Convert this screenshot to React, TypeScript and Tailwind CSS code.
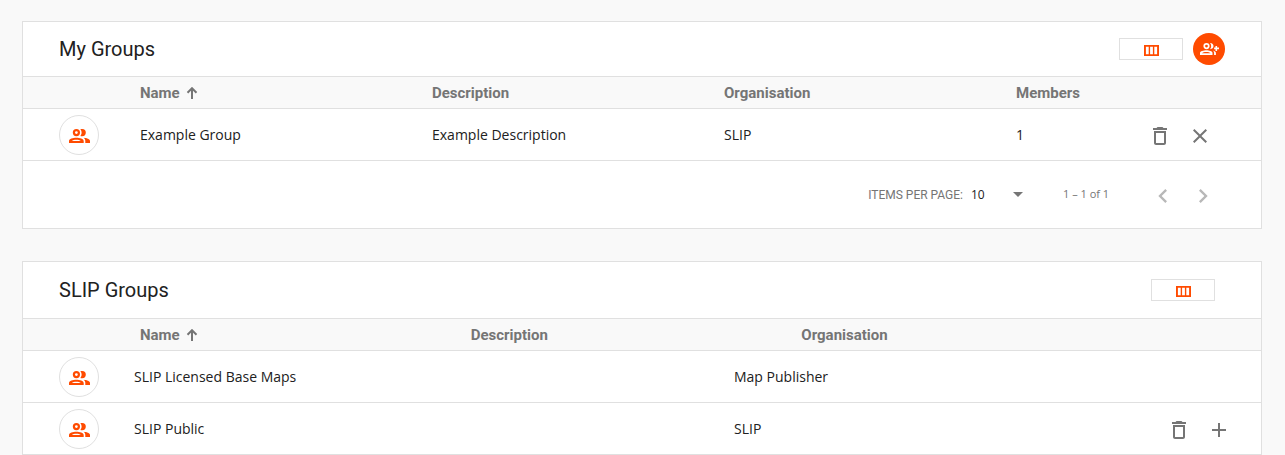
import React from "react";
import { MdAdd, MdChevronLeft, MdChevronRight, MdClose, MdOutlineDelete } from "react-icons/md";

function SortArrow() {
  return (
    <svg width="12" height="12" viewBox="0 0 12 12" fill="none" stroke="#757575" strokeWidth="2" aria-hidden="true">
      <path d="M6 12V1.5M1.5 5.7 6 1.2 10.5 5.7" />
    </svg>
  );
}

function PeopleIcon() {
  return (
    <svg width="21" height="14" viewBox="0 0 21 14" fill="currentColor" aria-hidden="true">
      <path
        fillRule="evenodd"
        d="M7.4 0a3.6 3.6 0 1 1 0 7.2 3.6 3.6 0 0 1 0-7.2zm0 2.2a1.4 1.4 0 1 0 0 2.8 1.4 1.4 0 0 0 0-2.8zM0 14v-2C0 9.8 4 8.7 7.3 8.7s7.4 1.1 7.4 3.3v2zm2.9-2.1h8.900c-.8-.7-2.700-1.100-4.500-1.100s-3.700.4-4.400 1.100z"
      />
      <path d="M11.300.200C12 0 12.600 0 13.200 0a3.600 3.600 0 0 1 0 7.200c-.6 0-1.200 0-1.900-.2.900-1 1.300-2.100 1.300-3.400S12.200 1.200 11.300.200zM14.700 8.800c3.200.3 6.300 1.300 6.300 3.200v2h-4.700v-2c0-1.400-.5-2.400-1.600-3.200z" />
    </svg>
  );
}

function GroupAddIcon() {
  return (
    <svg width="19" height="12" viewBox="0 0 19 12" fill="currentColor" aria-hidden="true">
      <path
        fillRule="evenodd"
        d="M6.500 0a3.100 3.100 0 1 1 0 6.200 3.100 3.100 0 0 1 0-6.200zm0 1.700a1.400 1.400 0 1 0 0 2.800 1.400 1.400 0 0 0 0-2.800zM0 12v-2c0-1.700 3.500-2.700 6.300-2.700s6.200 1 6.200 2.700v2zm2-1.700h8.500c-.6-.7-2.500-1.200-4.200-1.200s-3.700.5-4.300 1.200z"
      />
      <path d="M10 0c2.400 0 3.500 1.400 3.500 3.100S12.400 6.200 10 6.200c.8-.9 1.200-2 1.200-3.100S10.800.9 10 0zM12.700 7.600c1.900.4 3.200 1.200 3.200 2.400v2h-1.800v-2c0-1-.5-1.800-1.400-2.400zM15.500 3h1.600v1.600H19v1.600h-1.900v1.700h-1.600V6.200h-1.400V4.600h1.400z" />
    </svg>
  );
}

function ColumnsIcon() {
  return (
    <svg width="15" height="11" viewBox="0 0 15 11" aria-hidden="true">
      <path
        fill="currentColor"
        fillRule="evenodd"
        d="M0 0h15v11H0zM1.900 1.800v7.400h2.800V1.800zM6.100 1.800v7.400h2.800V1.800zM10.300 1.800v7.400h2.800V1.800z"
      />
    </svg>
  );
}

function ColumnsButton() {
  return (
    <button
      type="button"
      aria-label="Choose columns"
      className="flex h-[22px] w-16 items-center justify-center border border-[#e0e0e0] bg-white pt-[3px] text-[#ff4b00]"
    >
      <ColumnsIcon />
    </button>
  );
}

function Avatar() {
  return (
    <span className="flex size-10 items-center justify-center rounded-full border border-[#e0e0e0] pt-[2px] text-[#ff4b00]">
      <PeopleIcon />
    </span>
  );
}

function IconButton({ label, disabled, children }: { label: string; disabled?: boolean; children: React.ReactNode }) {
  return (
    <button
      type="button"
      aria-label={label}
      disabled={disabled}
      className="flex size-10 items-center justify-center pt-[2px] text-[#757575] disabled:text-[#b8b8b8]"
    >
      {children}
    </button>
  );
}

function SortHeader() {
  return (
    <button type="button" className="flex items-center gap-[6px] font-bold">
      Name
      <SortArrow />
    </button>
  );
}

const headRow = "flex h-8 items-center border-b border-[#e0e0e0] bg-[#f9f9f9] pt-px pl-9 text-[15px] text-[#757575]";
const bodyRow = "flex h-[52px] items-center border-b border-[#e0e0e0] pl-9";
const cell = "min-w-0 flex-1 text-left";

export default function App() {
  return (
    <main className="flex min-h-screen flex-col gap-8 bg-[#f9f9f9] px-[22px] pt-[21px] font-['Roboto',sans-serif] text-[#212121]">
      <section className="mr-px border border-[#e0e0e0] bg-white">
        <header className="flex h-[55px] items-center justify-between border-b border-[#e0e0e0] pr-9 pl-9">
          <h2 className="text-xl">My Groups</h2>
          <div className="flex items-center gap-[10px]">
            <ColumnsButton />
            <button
              type="button"
              aria-label="Add group"
              className="flex size-8 items-center justify-center rounded-full bg-[#ff4b00] text-white"
            >
              <GroupAddIcon />
            </button>
          </div>
        </header>
        <table className="block">
          <thead className="block">
            <tr className={headRow}>
              <th className="w-[81px]" aria-label="Icon" />
              <th className={cell}><SortHeader /></th>
              <th className={cell}>Description</th>
              <th className={cell}>Organisation</th>
              <th className="w-[116px] text-left">Members</th>
              <th className="w-[129px]" aria-label="Actions" />
            </tr>
          </thead>
          <tbody className="block font-['Open_Sans',sans-serif] text-sm">
            <tr className={bodyRow}>
              <td className="w-[81px]"><Avatar /></td>
              <td className={cell}>Example Group</td>
              <td className={cell}>Example Description</td>
              <td className={cell}>SLIP</td>
              <td className="w-[116px]">1</td>
              <td className="flex w-[129px] justify-end pr-[41px]">
                <IconButton label="Delete group"><MdOutlineDelete size={24} /></IconButton>
                <IconButton label="Leave group"><MdClose size={24} /></IconButton>
              </td>
            </tr>
          </tbody>
        </table>
        <footer className="flex h-[67px] items-center justify-end pr-[38px] text-xs text-[#757575]">
          <label htmlFor="page-size">ITEMS PER PAGE:</label>
          <span className="relative ml-2 flex w-[52px] items-center">
            <select
              id="page-size"
              defaultValue="10"
              className="w-full appearance-none bg-transparent font-['Open_Sans',sans-serif] text-[#212121]"
            >
              <option>10</option>
              <option>25</option>
              <option>50</option>
            </select>
            <svg className="pointer-events-none absolute right-0" width="10" height="5" viewBox="0 0 10 5" aria-hidden="true">
              <path d="M0 0h10L5 5z" fill="#757575" />
            </svg>
          </span>
          <span className="mr-8 ml-10 min-w-12 font-['Open_Sans',sans-serif] text-[11px]">1 – 1 of 1</span>
          <IconButton label="Previous page" disabled><MdChevronLeft size={28} /></IconButton>
          <IconButton label="Next page" disabled><MdChevronRight size={28} /></IconButton>
        </footer>
      </section>

      <section className="mr-px border border-b-0 border-[#e0e0e0] bg-white">
        <header className="flex h-[57px] items-center justify-between border-b border-[#e0e0e0] pr-[46px] pl-9">
          <h2 className="text-xl">SLIP Groups</h2>
          <ColumnsButton />
        </header>
        <table className="block">
          <thead className="block">
            <tr className={headRow}>
              <th className="w-[81px]" aria-label="Icon" />
              <th className={cell}><SortHeader /></th>
              <th className={cell}>Description</th>
              <th className={cell}>Organisation</th>
              <th className="w-[129px]" aria-label="Actions" />
            </tr>
          </thead>
          <tbody className="block font-['Open_Sans',sans-serif] text-sm">
            <tr className={bodyRow}>
              <td className="w-[75px]"><Avatar /></td>
              <td className={cell}>SLIP Licensed Base Maps</td>
              <td className={cell} />
              <td className={cell}>Map Publisher</td>
              <td className="w-[227px]" />
            </tr>
            <tr className={bodyRow}>
              <td className="w-[75px]"><Avatar /></td>
              <td className={cell}>SLIP Public</td>
              <td className={cell} />
              <td className={cell}>SLIP</td>
              <td className="flex w-[227px] justify-end pr-[22px]">
                <IconButton label="Delete group"><MdOutlineDelete size={24} /></IconButton>
                <IconButton label="Join group"><MdAdd size={24} /></IconButton>
              </td>
            </tr>
          </tbody>
        </table>
      </section>
    </main>
  );
}
